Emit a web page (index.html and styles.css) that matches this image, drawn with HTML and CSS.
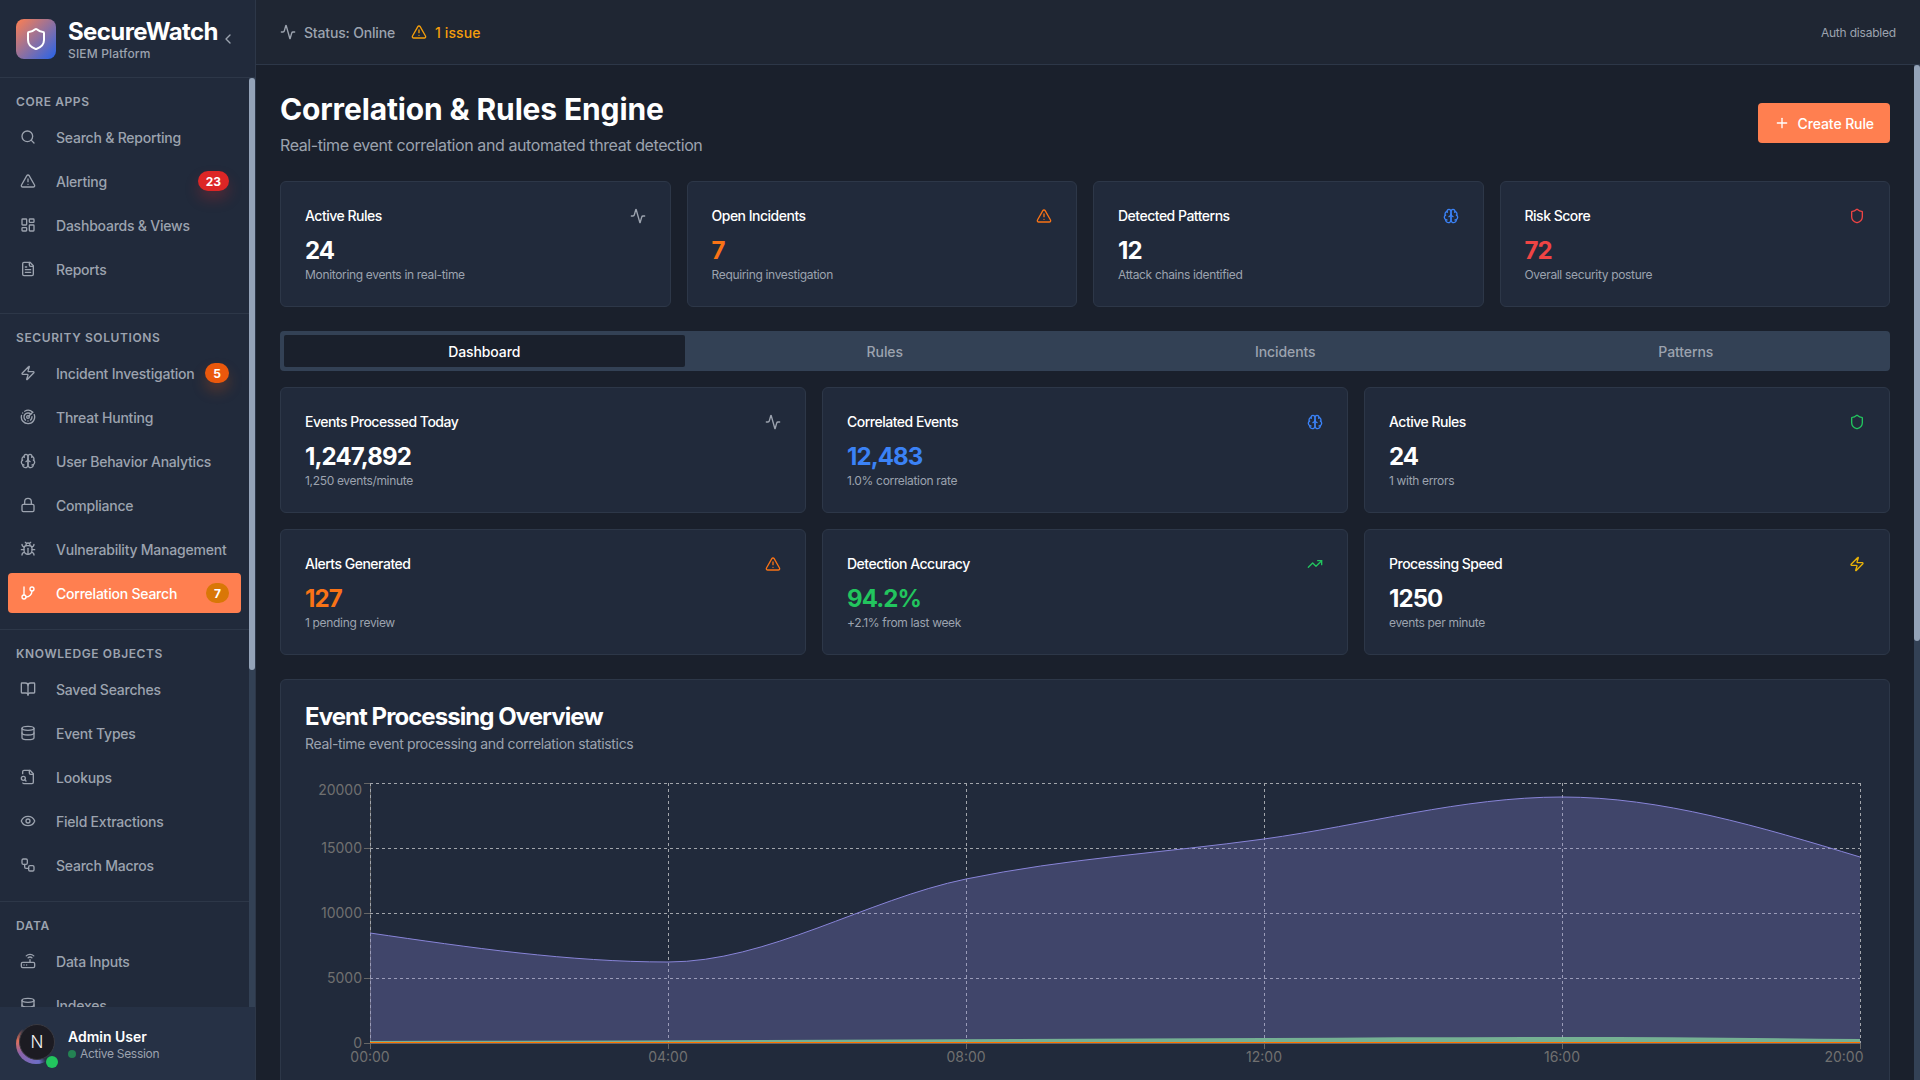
FILE: index.html
```html
<!DOCTYPE html>
<html lang="en">
<head>
    <meta charset="utf-8">
    <title>SecureWatch - Correlation &amp; Rules Engine</title>
    <link rel="stylesheet" href="styles.css">
</head>
<body>
    <svg class="sprite" aria-hidden="true">
        <symbol id="i-search" viewBox="0 0 24 24"><circle cx="11" cy="11" r="8"/><path d="m21 21-4.3-4.3"/></symbol>
        <symbol id="i-alert" viewBox="0 0 24 24"><path d="m21.73 18-8-14a2 2 0 0 0-3.48 0l-8 14A2 2 0 0 0 4 21h16a2 2 0 0 0 1.73-3"/><path d="M12 9v4"/><path d="M12 17h.01"/></symbol>
        <symbol id="i-dashboard" viewBox="0 0 24 24"><rect width="7" height="9" x="3" y="3" rx="1"/><rect width="7" height="5" x="14" y="3" rx="1"/><rect width="7" height="9" x="14" y="12" rx="1"/><rect width="7" height="5" x="3" y="16" rx="1"/></symbol>
        <symbol id="i-file" viewBox="0 0 24 24"><path d="M15 2H6a2 2 0 0 0-2 2v16a2 2 0 0 0 2 2h12a2 2 0 0 0 2-2V7Z"/><path d="M14 2v4a2 2 0 0 0 2 2h4"/><path d="M10 9H8"/><path d="M16 13H8"/><path d="M16 17H8"/></symbol>
        <symbol id="i-zap" viewBox="0 0 24 24"><path d="M4 14a1 1 0 0 1-.78-1.63l9.9-10.2a.5.5 0 0 1 .86.46l-1.92 6.02A1 1 0 0 0 13 10h7a1 1 0 0 1 .78 1.63l-9.9 10.2a.5.5 0 0 1-.86-.46l1.92-6.02A1 1 0 0 0 11 14z"/></symbol>
        <symbol id="i-radar" viewBox="0 0 24 24"><path d="M19.07 4.93A10 10 0 0 0 6.99 3.34"/><path d="M4 6h.01"/><path d="M2.29 9.62A10 10 0 1 0 21.31 8.35"/><path d="M16.24 7.76A6 6 0 1 0 8.23 16.67"/><path d="M12 18h.01"/><path d="M17.99 11.66A6 6 0 0 1 15.77 16.67"/><circle cx="12" cy="12" r="2"/><path d="m13.41 10.59 5.66-5.66"/></symbol>
        <symbol id="i-brain" viewBox="0 0 24 24"><path d="M12 5a3 3 0 1 0-5.997.125 4 4 0 0 0-2.526 5.77 4 4 0 0 0 .556 6.588A4 4 0 1 0 12 18Z"/><path d="M12 5a3 3 0 1 1 5.997.125 4 4 0 0 1 2.526 5.77 4 4 0 0 1-.556 6.588A4 4 0 1 1 12 18Z"/><path d="M15 13a4.5 4.5 0 0 1-3-4 4.5 4.5 0 0 1-3 4"/><path d="M17.599 6.5a3 3 0 0 0 .399-1.375"/><path d="M6.003 5.125A3 3 0 0 0 6.401 6.5"/><path d="M3.477 10.896a4 4 0 0 1 .585-.396"/><path d="M19.938 10.5a4 4 0 0 1 .585.396"/><path d="M6 18a4 4 0 0 1-1.967-.516"/><path d="M19.967 17.484A4 4 0 0 1 18 18"/></symbol>
        <symbol id="i-lock" viewBox="0 0 24 24"><rect width="18" height="11" x="3" y="11" rx="2" ry="2"/><path d="M7 11V7a5 5 0 0 1 10 0v4"/></symbol>
        <symbol id="i-bug" viewBox="0 0 24 24"><path d="m8 2 1.88 1.88"/><path d="M14.12 3.88 16 2"/><path d="M9 7.13v-1a3.003 3.003 0 1 1 6 0v1"/><path d="M12 20c-3.3 0-6-2.7-6-6v-3a4 4 0 0 1 4-4h4a4 4 0 0 1 4 4v3c0 3.3-2.7 6-6 6"/><path d="M12 20v-9"/><path d="M6.53 9C4.6 8.8 3 7.1 3 5"/><path d="M6 13H2"/><path d="M3 21c0-2.1 1.7-3.9 3.8-4"/><path d="M20.97 5c0 2.1-1.6 3.8-3.5 4"/><path d="M22 13h-4"/><path d="M17.2 17c2.1.1 3.8 1.9 3.8 4"/></symbol>
        <symbol id="i-branch" viewBox="0 0 24 24"><line x1="6" x2="6" y1="3" y2="15"/><circle cx="18" cy="6" r="3"/><circle cx="6" cy="18" r="3"/><path d="M18 9a9 9 0 0 1-9 9"/></symbol>
        <symbol id="i-book" viewBox="0 0 24 24"><path d="M12 7v14"/><path d="M3 18a1 1 0 0 1-1-1V4a1 1 0 0 1 1-1h5a4 4 0 0 1 4 4 4 4 0 0 1 4-4h5a1 1 0 0 1 1 1v13a1 1 0 0 1-1 1h-6a3 3 0 0 0-3 3 3 3 0 0 0-3-3z"/></symbol>
        <symbol id="i-database" viewBox="0 0 24 24"><ellipse cx="12" cy="5" rx="9" ry="3"/><path d="M3 5V19A9 3 0 0 0 21 19V5"/><path d="M3 12A9 3 0 0 0 21 12"/></symbol>
        <symbol id="i-filesearch" viewBox="0 0 24 24"><path d="M14 2v4a2 2 0 0 0 2 2h4"/><path d="M4.268 21a2 2 0 0 0 1.727 1H18a2 2 0 0 0 2-2V7l-5-5H6a2 2 0 0 0-2 2v3"/><path d="m9 18-1.5-1.5"/><circle cx="5" cy="14" r="3"/></symbol>
        <symbol id="i-eye" viewBox="0 0 24 24"><path d="M2.062 12.348a1 1 0 0 1 0-.696 10.75 10.75 0 0 1 19.876 0 1 1 0 0 1 0 .696 10.75 10.75 0 0 1-19.876 0"/><circle cx="12" cy="12" r="3"/></symbol>
        <symbol id="i-workflow" viewBox="0 0 24 24"><rect width="8" height="8" x="3" y="3" rx="2"/><path d="M7 11v4a2 2 0 0 0 2 2h4"/><rect width="8" height="8" x="13" y="13" rx="2"/></symbol>
        <symbol id="i-router" viewBox="0 0 24 24"><rect width="20" height="8" x="2" y="14" rx="2"/><path d="M6.01 18H6"/><path d="M10.01 18H10"/><path d="M15 10v4"/><path d="M17.84 7.17a4 4 0 0 0-5.66 0"/><path d="M20.66 4.34a8 8 0 0 0-11.31 0"/></symbol>
        <symbol id="i-activity" viewBox="0 0 24 24"><path d="M22 12h-2.48a2 2 0 0 0-1.93 1.46l-2.35 8.36a.25.25 0 0 1-.48 0L9.24 2.18a.25.25 0 0 0-.48 0l-2.35 8.36A2 2 0 0 1 4.49 12H2"/></symbol>
        <symbol id="i-shield" viewBox="0 0 24 24"><path d="M20 13c0 5-3.5 7.5-7.66 8.95a1 1 0 0 1-.67-.01C7.5 20.5 4 18 4 13V6a1 1 0 0 1 1-1c2 0 4.5-1.2 6.24-2.72a1.17 1.17 0 0 1 1.52 0C14.51 3.81 17 5 19 5a1 1 0 0 1 1 1z"/></symbol>
        <symbol id="i-plus" viewBox="0 0 24 24"><path d="M5 12h14"/><path d="M12 5v14"/></symbol>
        <symbol id="i-trending" viewBox="0 0 24 24"><polyline points="22 7 13.5 15.5 8.5 10.5 2 17"/><polyline points="16 7 22 7 22 13"/></symbol>
        <symbol id="i-chevron" viewBox="0 0 24 24"><path d="m15 18-6-6 6-6"/></symbol>
    </svg>

    <aside class="sidebar">
        <div class="brand">
            <div class="brand-logo"><svg class="icon icon-24"><use href="#i-shield"/></svg></div>
            <div class="brand-text">
                <div class="brand-name">SecureWatch</div>
                <div class="brand-sub">SIEM Platform</div>
            </div>
            <svg class="icon brand-toggle"><use href="#i-chevron"/></svg>
        </div>

        <nav class="nav">
            <div class="nav-inner">
                <section class="nav-section nav-section-first">
                    <h3>Core Apps</h3>
                    <a class="nav-item"><svg class="icon"><use href="#i-search"/></svg><span>Search &amp; Reporting</span></a>
                    <a class="nav-item"><svg class="icon"><use href="#i-alert"/></svg><span>Alerting</span><b class="badge badge-red">23</b></a>
                    <a class="nav-item"><svg class="icon"><use href="#i-dashboard"/></svg><span>Dashboards &amp; Views</span></a>
                    <a class="nav-item"><svg class="icon"><use href="#i-file"/></svg><span>Reports</span></a>
                </section>
                <section class="nav-section">
                    <h3>Security Solutions</h3>
                    <a class="nav-item"><svg class="icon"><use href="#i-zap"/></svg><span>Incident Investigation</span><b class="badge badge-orange">5</b></a>
                    <a class="nav-item"><svg class="icon"><use href="#i-radar"/></svg><span>Threat Hunting</span></a>
                    <a class="nav-item"><svg class="icon"><use href="#i-brain"/></svg><span>User Behavior Analytics</span></a>
                    <a class="nav-item"><svg class="icon"><use href="#i-lock"/></svg><span>Compliance</span></a>
                    <a class="nav-item"><svg class="icon"><use href="#i-bug"/></svg><span>Vulnerability Management</span></a>
                    <a class="nav-item active"><svg class="icon"><use href="#i-branch"/></svg><span>Correlation Search</span><b class="badge badge-amber">7</b></a>
                </section>
                <section class="nav-section">
                    <h3>Knowledge Objects</h3>
                    <a class="nav-item"><svg class="icon"><use href="#i-book"/></svg><span>Saved Searches</span></a>
                    <a class="nav-item"><svg class="icon"><use href="#i-database"/></svg><span>Event Types</span></a>
                    <a class="nav-item"><svg class="icon"><use href="#i-filesearch"/></svg><span>Lookups</span></a>
                    <a class="nav-item"><svg class="icon"><use href="#i-eye"/></svg><span>Field Extractions</span></a>
                    <a class="nav-item"><svg class="icon"><use href="#i-workflow"/></svg><span>Search Macros</span></a>
                </section>
                <section class="nav-section">
                    <h3>Data</h3>
                    <a class="nav-item"><svg class="icon"><use href="#i-router"/></svg><span>Data Inputs</span></a>
                    <a class="nav-item"><svg class="icon"><use href="#i-database"/></svg><span>Indexes</span></a>
                </section>
            </div>
            <div class="scrollbar scrollbar-nav"><i></i></div>
        </nav>

        <div class="user">
            <div class="avatar"><div class="avatar-inner">N</div><i class="avatar-dot"></i></div>
            <div>
                <div class="user-name">Admin User</div>
                <div class="user-state"><i></i>Active Session</div>
            </div>
        </div>
    </aside>

    <div class="page">
        <header class="topbar">
            <div class="topbar-status"><svg class="icon"><use href="#i-activity"/></svg>Status: Online</div>
            <div class="topbar-issue"><svg class="icon"><use href="#i-alert"/></svg>1 issue</div>
            <div class="topbar-auth">Auth disabled</div>
        </header>

        <main class="main">
            <div class="content">
                <div class="title-row">
                    <div>
                        <h1>Correlation &amp; Rules Engine</h1>
                        <p>Real-time event correlation and automated threat detection</p>
                    </div>
                    <button class="btn-create"><svg class="icon"><use href="#i-plus"/></svg>Create Rule</button>
                </div>

                <div class="grid grid-4">
                    <div class="card">
                        <div class="card-head"><span>Active Rules</span><svg class="icon muted"><use href="#i-activity"/></svg></div>
                        <div class="value">24</div>
                        <div class="note">Monitoring events in real-time</div>
                    </div>
                    <div class="card">
                        <div class="card-head"><span>Open Incidents</span><svg class="icon orange"><use href="#i-alert"/></svg></div>
                        <div class="value orange">7</div>
                        <div class="note">Requiring investigation</div>
                    </div>
                    <div class="card">
                        <div class="card-head"><span>Detected Patterns</span><svg class="icon blue"><use href="#i-brain"/></svg></div>
                        <div class="value">12</div>
                        <div class="note">Attack chains identified</div>
                    </div>
                    <div class="card">
                        <div class="card-head"><span>Risk Score</span><svg class="icon red"><use href="#i-shield"/></svg></div>
                        <div class="value red">72</div>
                        <div class="note">Overall security posture</div>
                    </div>
                </div>

                <div class="tabs">
                    <div class="tab active">Dashboard</div>
                    <div class="tab">Rules</div>
                    <div class="tab">Incidents</div>
                    <div class="tab">Patterns</div>
                </div>

                <div class="grid grid-3">
                    <div class="card">
                        <div class="card-head"><span>Events Processed Today</span><svg class="icon muted"><use href="#i-activity"/></svg></div>
                        <div class="value">1,247,892</div>
                        <div class="note">1,250 events/minute</div>
                    </div>
                    <div class="card">
                        <div class="card-head"><span>Correlated Events</span><svg class="icon blue"><use href="#i-brain"/></svg></div>
                        <div class="value blue">12,483</div>
                        <div class="note">1.0% correlation rate</div>
                    </div>
                    <div class="card">
                        <div class="card-head"><span>Active Rules</span><svg class="icon green"><use href="#i-shield"/></svg></div>
                        <div class="value">24</div>
                        <div class="note">1 with errors</div>
                    </div>
                    <div class="card">
                        <div class="card-head"><span>Alerts Generated</span><svg class="icon orange"><use href="#i-alert"/></svg></div>
                        <div class="value orange">127</div>
                        <div class="note">1 pending review</div>
                    </div>
                    <div class="card">
                        <div class="card-head"><span>Detection Accuracy</span><svg class="icon green"><use href="#i-trending"/></svg></div>
                        <div class="value green">94.2%</div>
                        <div class="note">+2.1% from last week</div>
                    </div>
                    <div class="card">
                        <div class="card-head"><span>Processing Speed</span><svg class="icon amber"><use href="#i-zap"/></svg></div>
                        <div class="value">1250</div>
                        <div class="note">events per minute</div>
                    </div>
                </div>

                <div class="card chart-card">
                    <h2>Event Processing Overview</h2>
                    <p>Real-time event processing and correlation statistics</p>
                    <svg class="chart" viewBox="0 0 1560 300" width="1560" height="300">
                        <g class="chart-axis">
                            <line x1="65.5" x2="65.5" y1="5" y2="271"/>
                            <line x1="59" x2="1555" y1="265.500" y2="265.500"/>
                            <line x1="59" x2="65" y1="5.500" y2="5.500"/>
                            <line x1="59" x2="65" y1="70.500" y2="70.500"/>
                            <line x1="59" x2="65" y1="135.500" y2="135.500"/>
                            <line x1="59" x2="65" y1="200.500" y2="200.500"/>
                            <line x1="363.500" x2="363.500" y1="265" y2="271"/>
                            <line x1="661.500" x2="661.500" y1="265" y2="271"/>
                            <line x1="959.500" x2="959.500" y1="265" y2="271"/>
                            <line x1="1257.500" x2="1257.500" y1="265" y2="271"/>
                            <line x1="1555.500" x2="1555.500" y1="265" y2="271"/>
                        </g>
                        <g class="chart-grid">
                            <line x1="65" x2="1555" y1="5.5" y2="5.5"/>
                            <line x1="65" x2="1555" y1="70.5" y2="70.5"/>
                            <line x1="65" x2="1555" y1="135.5" y2="135.5"/>
                            <line x1="65" x2="1555" y1="200.5" y2="200.5"/>
                            <line x1="65.5" x2="65.5" y1="5" y2="265"/>
                            <line x1="363.5" x2="363.5" y1="5" y2="265"/>
                            <line x1="661.5" x2="661.5" y1="5" y2="265"/>
                            <line x1="959.5" x2="959.5" y1="5" y2="265"/>
                            <line x1="1257.5" x2="1257.5" y1="5" y2="265"/>
                            <line x1="1555.5" x2="1555.5" y1="5" y2="265"/>
                        </g>
                        <path class="area-events" d="M65 155C164.300 169.500 263.700 184 363 184C462.300 184 561.700 121.500 661 101C760.300 80.500 859.700 74.700 959 61C1058.300 47.300 1157.700 19 1257 19C1356.300 19 1455.700 49 1555 79V265H65Z"/>
                        <path class="line-events" d="M65 155C164.300 169.500 263.700 184 363 184C462.300 184 561.700 121.500 661 101C760.300 80.500 859.700 74.700 959 61C1058.300 47.300 1157.700 19 1257 19C1356.300 19 1455.700 49 1555 79"/>
                        <path class="area-correlated" d="M65 263C363 263 661 261 959 260C1058 259.500 1157 259 1257 259C1356 259 1455 260 1555 261V265H65Z"/>
                        <line class="line-alerts" x1="65" x2="1555" y1="264.500" y2="264.500"/>
                        <g class="chart-labels chart-labels-y">
                            <text x="57" y="17">20000</text>
                            <text x="57" y="75">15000</text>
                            <text x="57" y="140">10000</text>
                            <text x="57" y="205">5000</text>
                            <text x="57" y="270">0</text>
                        </g>
                        <g class="chart-labels chart-labels-x">
                            <text x="65" y="284">00:00</text>
                            <text x="363" y="284">04:00</text>
                            <text x="661" y="284">08:00</text>
                            <text x="959" y="284">12:00</text>
                            <text x="1257" y="284">16:00</text>
                            <text x="1539" y="284">20:00</text>
                        </g>
                    </svg>
                </div>
            </div>
            <div class="scrollbar scrollbar-main"><i></i></div>
        </main>
    </div>
</body>
</html>
```

FILE: styles.css
```css
* {
    box-sizing: border-box;
}

html, body {
    height: 100%;
}

body {
    display: flex;
    margin: 0;
    overflow: hidden;

    font-family: Inter, "Noto Sans", sans-serif;
    color: #fff;
    background-color: #1a202c;
}

h1, h2, h3, p {
    margin: 0;
}

.sprite {
    position: absolute;
    width: 0;
    height: 0;
}

.icon {
    flex: none;
    width: 16px;
    height: 16px;

    fill: none;
    stroke: currentColor;
    stroke-width: 2;
    stroke-linecap: round;
    stroke-linejoin: round;
}

.icon-24 {
    width: 24px;
    height: 24px;
}

.muted { color: #9ca3af; }
.orange { color: #f97316; }
.blue { color: #3b82f6; }
.red { color: #ef4444; }
.green { color: #22c55e; }
.amber { color: #eab308; }

/* scrollbars */
.scrollbar {
    flex: none;
    width: 6px;

    background-color: #334155;
}

.scrollbar i {
    display: block;

    background-color: #94a3b8;
    border-radius: 3px;
}

.scrollbar-nav i {
    height: 592px;
}

.scrollbar-main i {
    height: 576px;
}

/* sidebar */
.sidebar {
    display: flex;
    flex: none;
    flex-direction: column;
    width: 256px;
    height: 100%;

    background-color: #212a3b;
    border-right: 1px solid #2d3748;
}

.brand {
    display: flex;
    flex: none;
    align-items: center;
    height: 78px;
    padding: 0 16px;

    border-bottom: 1px solid #2d3748;
}

.brand-logo {
    display: flex;
    flex: none;
    align-items: center;
    justify-content: center;
    width: 40px;
    height: 40px;
    margin-right: 12px;

    background: linear-gradient(135deg, #ff7f50, #2563eb);
    border-radius: 8px;
}

.brand-text {
    padding-top: 2px;
}

.brand-name {
    font-size: 24px;
    font-weight: 700;
    line-height: 28px;
    letter-spacing: -0.6px;
}

.brand-sub {
    font-size: 12px;
    font-weight: 500;
    line-height: 16px;
    letter-spacing: 0.15px;
    color: #9ca3af;
}

.brand-toggle {
    margin: 0 0 0 2px;

    color: #9ca3af;
}

.nav {
    display: flex;
    flex: 1;
    min-height: 0;
    overflow: hidden;
}

.nav-inner {
    flex: 1;
    min-width: 0;
    overflow: hidden;
}

.nav-section {
    padding: 16px 0;

    border-top: 1px solid #2d3748;
}

.nav-section-first {
    padding-bottom: 24px;

    border-top: none;
}

.nav-section h3 {
    margin-bottom: 7px;
    padding-left: 16px;

    font-size: 12px;
    font-weight: 600;
    line-height: 16px;
    letter-spacing: 0.6px;
    text-transform: uppercase;
    color: #9ca3af;
}

.nav-item {
    display: flex;
    align-items: center;
    height: 40px;
    margin: 0 8px 4px;
    padding: 0 12px;

    font-size: 14px;
    font-weight: 500;
    letter-spacing: -0.22px;
    color: #9ca3af;
    border-radius: 4px;
}

.nav-item:last-child {
    margin-bottom: 0;
}

.nav-item .icon {
    margin-right: 20px;
}

.nav-item span {
    flex: 1;
    white-space: nowrap;
}

.nav-item.active {
    color: #fff;
    background-color: #ff7f50;
}

.badge {
    display: flex;
    align-items: center;
    justify-content: center;
    flex: none;
    min-width: 22px;
    height: 20px;
    padding: 0 8px;

    font-size: 12px;
    font-weight: 700;
    letter-spacing: 0;
    color: #fff;
    border-radius: 10px;
}

.badge-red {
    background-color: #dc2626;
    box-shadow: 0 8px 14px rgba(220, 38, 38, .25);
}

.badge-orange {
    background-color: #ea580c;
    box-shadow: 0 8px 14px rgba(234, 88, 12, .25);
}

.badge-amber {
    background-color: #d97706;
}

.user {
    display: flex;
    flex: none;
    align-items: center;
    height: 73px;
    padding: 0 16px;

    background-color: #263145;
}

.avatar {
    position: relative;
    flex: none;
    width: 40px;
    height: 40px;
    margin-right: 12px;
    padding: 0 1px 4px 3px;

    background: conic-gradient(from 150deg, #263145 0deg, #6d6fc7 20deg, #8a62a8 90deg, #e0705a 130deg, #263145 170deg);
    border-radius: 50%;
}

.avatar-inner {
    display: flex;
    align-items: center;
    justify-content: center;
    width: 36px;
    height: 36px;

    font-size: 17px;
    font-weight: 300;
    color: #f2f2f2;
    background-color: #1c1b22;
    border: 1px solid #3a3a42;
    border-radius: 50%;
}

.avatar-dot {
    position: absolute;
    right: -2px;
    bottom: -4px;
    width: 12px;
    height: 12px;

    background-color: #22c55e;
    border-radius: 50%;
}

.user-name {
    padding-top: 1px;

    font-size: 14px;
    font-weight: 600;
    line-height: 20px;
}

.user-state {
    display: flex;
    align-items: center;
    margin-top: -1px;

    font-size: 12px;
    line-height: 16px;
    letter-spacing: -0.3px;
    color: #9ca3af;
}

.user-state i {
    width: 8px;
    height: 8px;
    margin-right: 4px;

    background-color: #22c55e;
    border-radius: 50%;
    opacity: .55;
}

/* top bar */
.page {
    display: flex;
    flex: 1;
    flex-direction: column;
    min-width: 0;
    height: 100%;
}

.topbar {
    display: flex;
    flex: none;
    align-items: center;
    height: 65px;
    padding: 0 24px;

    font-size: 14px;
    font-weight: 500;
    background-color: #1f2633;
    border-bottom: 1px solid #2d3748;
}

.topbar-status,
.topbar-issue {
    display: flex;
    align-items: center;
}

.topbar .icon {
    margin-right: 8px;
}

.topbar-status {
    margin-right: 16px;

    letter-spacing: -0.17px;
    color: #9ca3af;
}

.topbar-issue {
    letter-spacing: 0.1px;
    color: #f59e0b;
}

.topbar-auth {
    margin-left: auto;

    font-size: 12px;
    font-weight: 400;
    letter-spacing: -0.2px;
    color: #9ca3af;
}

/* main */
.main {
    display: flex;
    flex: 1;
    min-height: 0;
    overflow: hidden;
}

.content {
    flex: 1;
    min-width: 0;
    padding: 26px 24px 24px;
    overflow: hidden;
}

.title-row {
    display: flex;
    align-items: center;
    justify-content: space-between;
    margin-bottom: 24px;
}

.title-row h1 {
    font-size: 30px;
    font-weight: 700;
    line-height: 36px;
    letter-spacing: -0.14px;
}

.title-row p {
    margin-top: 6px;

    font-size: 16px;
    line-height: 24px;
    letter-spacing: -0.4px;
    color: #9ca3af;
}

.btn-create {
    display: flex;
    align-items: center;
    height: 40px;
    margin-bottom: 2px;
    padding: 0 16px;

    font: 500 14px Inter, sans-serif;
    letter-spacing: -0.1px;
    color: #fff;
    background-color: #ff7f50;
    border: none;
    border-radius: 4px;
}

.btn-create .icon {
    margin-right: 8px;
}

.grid {
    display: grid;
    gap: 16px;
}

.grid-4 {
    grid-template-columns: repeat(4, 1fr);
}

.grid-3 {
    grid-template-columns: repeat(3, 1fr);
}

.card {
    padding: 24px;

    background-color: #212a3b;
    border: 1px solid #2d3748;
    border-radius: 6px;
}

.grid .card {
    padding-bottom: 23px;
}

.card-head {
    display: flex;
    align-items: center;
    justify-content: space-between;
    margin-bottom: 9px;

    font-size: 14px;
    font-weight: 500;
    line-height: 20px;
    letter-spacing: -0.5px;
}

.value {
    font-size: 24px;
    font-weight: 700;
    line-height: 32px;
    letter-spacing: -0.9px;
}

.note {
    font-size: 12px;
    line-height: 16px;
    letter-spacing: -0.33px;
    color: #9ca3af;
}

.tabs {
    display: grid;
    grid-template-columns: repeat(4, 1fr);
    height: 40px;
    margin: 24px 0 16px;
    padding: 4px;

    background-color: #334155;
    border-radius: 4px;
}

.tab {
    display: flex;
    align-items: center;
    justify-content: center;

    font-size: 14px;
    font-weight: 500;
    letter-spacing: -0.1px;
    color: #9ca3af;
    border-radius: 2px;
}

.tab.active {
    color: #fff;
    background-color: #1a202c;
}

/* chart */
.chart-card {
    margin-top: 24px;
}

.chart-card h2 {
    padding-top: 1px;

    font-size: 24px;
    font-weight: 700;
    line-height: 24px;
    letter-spacing: -0.95px;
}

.chart-card p {
    margin: 5px 0 24px;

    font-size: 14px;
    line-height: 20px;
    letter-spacing: -0.35px;
    color: #9ca3af;
}

.chart {
    display: block;
}

.chart-grid line {
    stroke: #a2a5ab;
    stroke-dasharray: 3 3;
}

.chart-axis line {
    stroke: #666;
}

.area-events {
    fill: #8884d8;
    fill-opacity: .3;
}

.line-events {
    fill: none;
    stroke: #8884d8;
}

.area-correlated {
    fill: #82ca9d;
    fill-opacity: .8;
}

.line-alerts {
    stroke: #ff7300;
}

.chart-labels text {
    font-size: 14px;
    fill: #707070;
}

.chart-labels-y text {
    text-anchor: end;
}

.chart-labels-x text {
    text-anchor: middle;
}
```
